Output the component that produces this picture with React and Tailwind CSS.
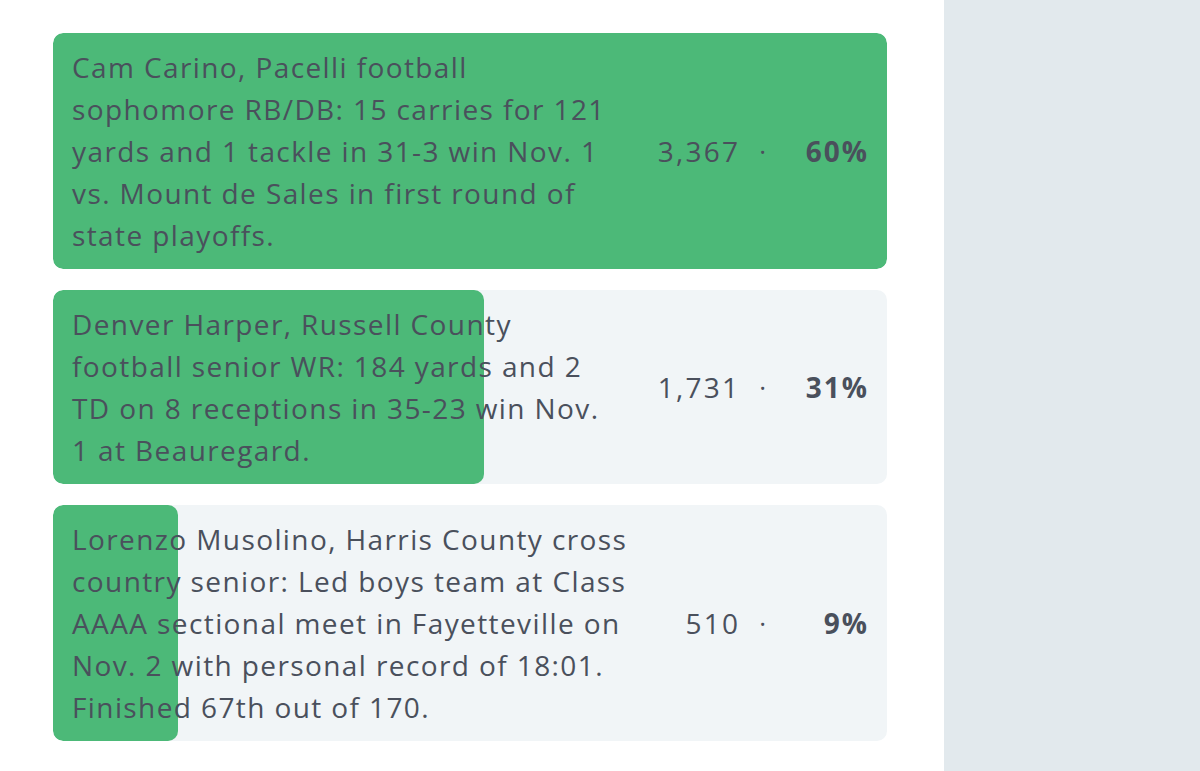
import React from 'react';

const RESULTS = [
  {
    text: 'Cam Carino, Pacelli football sophomore RB/DB: 15 carries for 121 yards and 1 tackle in 31-3 win Nov. 1 vs. Mount de Sales in first round of state playoffs.',
    votes: '3,367',
    pct: 60,
  },
  {
    text: 'Denver Harper, Russell County football senior WR: 184 yards and 2 TD on 8 receptions in 35-23 win Nov. 1 at Beauregard.',
    votes: '1,731',
    pct: 31,
  },
  {
    text: 'Lorenzo Musolino, Harris County cross country senior: Led boys team at Class AAAA sectional meet in Fayetteville on Nov. 2 with personal record of 18:01. Finished 67th out of 170.',
    votes: '510',
    pct: 9,
  },
];

export default function App() {
  const top = Math.max(...RESULTS.map(r => r.pct));

  return (
    <div className="flex min-h-[771px] bg-white" style={{ fontFamily: '"Open Sans", "Noto Sans", sans-serif' }}>
      {/* Poll results */}
      <main className="w-[944px] shrink-0 pl-[53px] pr-[57px] pt-[33px] flex flex-col gap-[21px]">
        {RESULTS.map((r, i) => (
          <ResultRow key={i} result={r} barWidth={(r.pct / top) * 100} />
        ))}
      </main>

      {/* Sidebar */}
      <aside className="flex-1 bg-[#e2e9ed]" />
    </div>
  );
}

function ResultRow({ result, barWidth }) {
  return (
    <div className="relative rounded-[10px] bg-[#f1f5f7] overflow-hidden">
      <div
        className="absolute inset-y-0 left-0 bg-[#4cb978] rounded-[10px]"
        style={{ width: `${barWidth}%` }}
      />
      <div className="relative flex items-center gap-10 py-[13px] pl-[19px] pr-[18px] text-[#4a505c]">
        <p className="flex-1 text-[28px] leading-[42px] tracking-[0.05em]">{result.text}</p>
        <div className="shrink-0 flex items-center text-[28px] tracking-[0.08em]">
          <span>{result.votes}</span>
          <span className="mx-[19px] text-[26px] tracking-normal">·</span>
          <span className="w-[84px] text-right font-bold tracking-[0.07em]">{result.pct}%</span>
        </div>
      </div>
    </div>
  );
}
